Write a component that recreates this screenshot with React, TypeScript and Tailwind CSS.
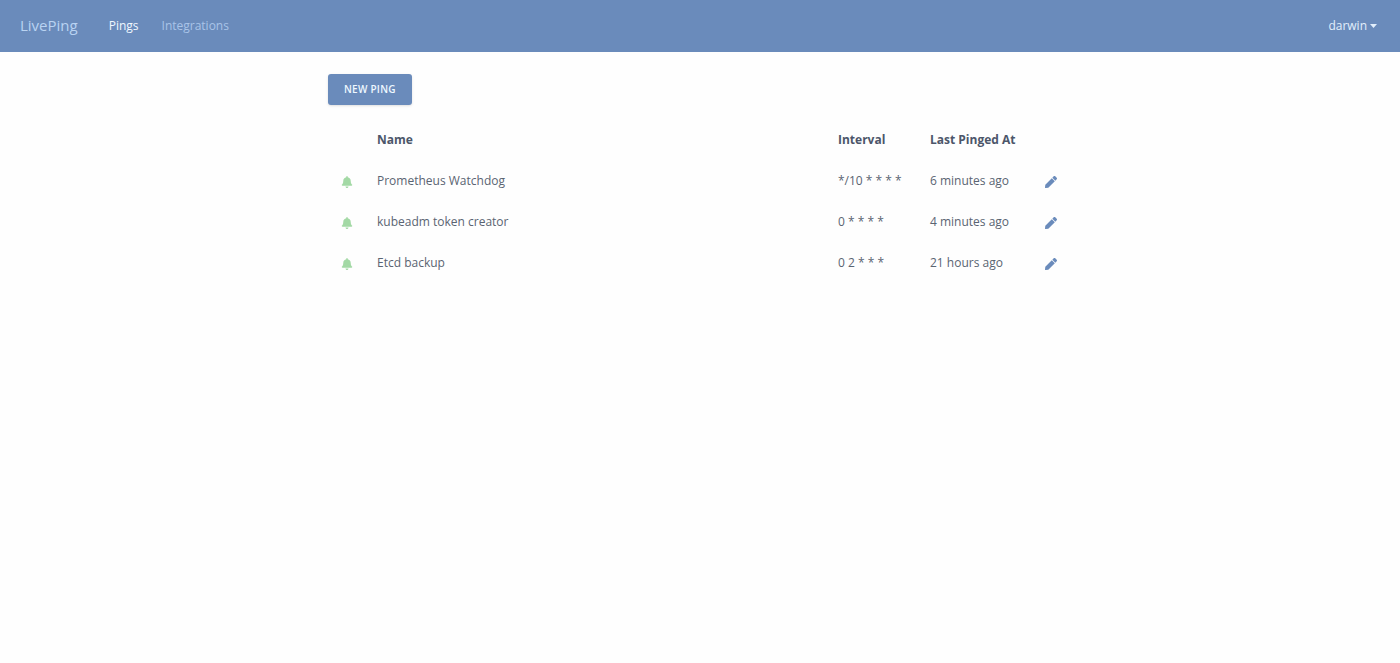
import { FaBell, FaPen } from "react-icons/fa";

type Ping = { name: string; interval: string; lastPinged: string };

const pings: Ping[] = [
  { name: "Prometheus Watchdog", interval: "*/10 * * * *", lastPinged: "6 minutes ago" },
  { name: "kubeadm token creator", interval: "0 * * * *", lastPinged: "4 minutes ago" },
  { name: "Etcd backup", interval: "0 2 * * *", lastPinged: "21 hours ago" },
];

function NavBar() {
  return (
    <nav className="flex h-[52px] items-center bg-[#6a8bbb] pr-[23px] pl-5 text-xs">
      <a href="#" className="mr-[31px] pb-0.5 text-[15px] leading-5 text-[#b9d3f2]">
        LivePing
      </a>
      <a href="#pings" aria-current="page" className="mr-[23px] text-[#f0f8ff]">
        Pings
      </a>
      <a href="#integrations" className="text-[#a9c4e8]">
        Integrations
      </a>
      <button type="button" className="ml-auto flex items-center gap-[3px] text-[#e2effc]">
        darwin
        <svg width="7" height="4" viewBox="0 0 7 4" aria-hidden="true">
          <path d="M0 0h7L3.5 4z" fill="currentColor" />
        </svg>
      </button>
    </nav>
  );
}

function PingTable() {
  return (
    <table className="mt-[14px] w-full table-fixed text-left text-xs leading-[17px] text-[#5a6472]">
      <colgroup>
        <col className="w-[37px]" />
        <col />
        <col className="w-[92px]" />
        <col className="w-[114px]" />
        <col className="w-10" />
      </colgroup>
      <thead>
        <tr className="font-bold text-[#4c566a]">
          <th className="p-3" aria-label="Status" />
          <th className="p-3">Name</th>
          <th className="p-3">Interval</th>
          <th className="py-3 pl-3 whitespace-nowrap">Last Pinged At</th>
          <th className="p-3" aria-label="Actions" />
        </tr>
      </thead>
      <tbody>
        {pings.map((ping) => (
          <tr key={ping.name}>
            <td className="py-3 pl-[13px]">
              <FaBell className="mt-[2px] size-3 text-[#a3d9a5]" aria-label="Active" />
            </td>
            <td className="p-3">{ping.name}</td>
            <td className="py-3 pl-3 whitespace-nowrap">{ping.interval}</td>
            <td className="p-3 whitespace-nowrap">{ping.lastPinged}</td>
            <td className="py-3 pl-[13px]">
              <a href="#edit" aria-label={`Edit ${ping.name}`} className="block text-[#6a8bbb]">
                <FaPen className="mt-[2px] size-3" />
              </a>
            </td>
          </tr>
        ))}
      </tbody>
    </table>
  );
}

export default function App() {
  return (
    <div className="min-h-screen bg-[#fefefe] font-['Open_Sans',sans-serif]">
      <NavBar />
      <main className="mx-auto max-w-[744px] pt-[22px]">
        <button
          type="button"
          className="block rounded-[3px] bg-[#6a8bbb] px-4 py-2 text-[10px] leading-[15px] font-semibold tracking-wide text-[#eef8ff] uppercase shadow-sm"
        >
          New Ping
        </button>
        <PingTable />
      </main>
    </div>
  );
}
